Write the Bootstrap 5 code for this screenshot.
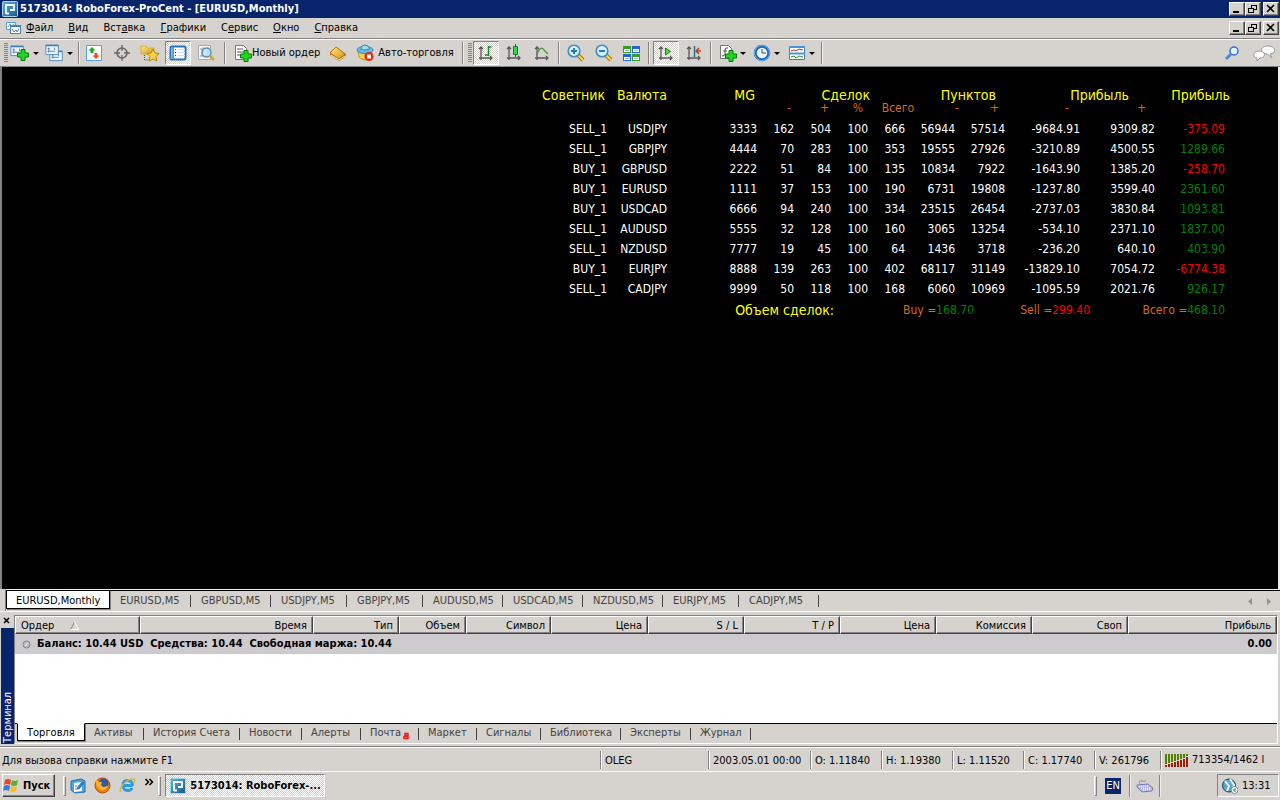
<!DOCTYPE html>
<html lang="ru">
<head>
<meta charset="utf-8">
<meta name="viewport" content="width=device-width, initial-scale=1">
<title>5173014: RoboForex-ProCent - [EURUSD,Monthly]</title>
<link href="https://cdn.jsdelivr.net/npm/bootstrap@5.3.0/dist/css/bootstrap.min.css" rel="stylesheet">
<style>
:root{--face:#d6d3ce;--shade:#848284;--navy:#08246b}
body{background:var(--face);color:#000;font-family:"DejaVu Sans Condensed","DejaVu Sans",sans-serif;font-size:11px;line-height:14px;overflow:hidden}
button{font:inherit;color:inherit;background:none;border:0;padding:0}
a{color:inherit;text-decoration:none}
svg{display:block;flex:none}
.crisp{shape-rendering:crispEdges}
.titlebar{background:var(--navy);color:#fff;height:18px;padding:0 1px 0 2px;font-weight:700;gap:2px}
.menubar{height:21px;padding:0 1px 0 2px;border-bottom:1px solid var(--shade)}
.menubar a{padding:2px 0;margin-right:15px}
.menubar a span{text-decoration:underline}
.winbtns{display:flex}
.winbtn{width:16px;height:14px;background:var(--face);border:1px solid;border-color:#fff #424142 #424142 #fff;box-shadow:inset -1px -1px var(--shade);display:flex;align-items:center;justify-content:center}
.winbtn:last-child{margin-left:2px}
.toolbar{height:28px;border-top:1px solid #fff;border-bottom:1px solid var(--shade);padding:0 2px 0 4px}
.grip{width:4px;height:20px;background:repeating-linear-gradient(var(--shade) 0 1px,transparent 1px 2px)}
.tool{height:24px;width:28px;display:flex;align-items:center;justify-content:center}
.tool.drop{width:35px;justify-content:start;gap:3px;padding-left:2px}
.tool.wide{width:auto;white-space:nowrap}
.pressed{background:repeating-conic-gradient(#fff 0 25%,var(--face) 0 50%) 0 0/2px 2px;border:1px solid;border-color:var(--shade) #fff #fff var(--shade)}
.tool.pressed{width:26px;margin:0 1px}
.caret{border:3px solid transparent;border-top-color:#000;border-bottom:0}
.bar{width:2px;height:22px;border-left:1px solid var(--shade);border-right:1px solid #eee;margin:0 2px}
.chart{background:#000;border-left:2px solid #848284;border-right:2px solid #efefef;padding:21px 48px 0 0;min-height:0}
.stats{width:690px;font-size:12px;line-height:20px;color:#fff}
.stats tr{display:grid;text-align:right;white-space:nowrap}
.stats th{font-weight:400;padding:0}
.stats td{padding:0}
.stats .heads{grid-template-columns:65px 62px 88px 115px 126px 133px 101px;color:#ff0;font-size:14px;line-height:14px}
.stats .subs{grid-template-columns:251px 38px 34px 51px 45px 40px 70px 77px;color:#d6691a;height:17px;line-height:12px}
.stats tbody tr{grid-template-columns:67px 60px 90px 37px 37px 37px 37px 50px 50px 75px 75px 70px}
.stats tfoot tr{grid-template-columns:294px 140px 116px 135px;color:#d6691a;line-height:22px}
.stats tfoot th{color:#ff0;font-size:14px}
.up{color:#008200}.down{color:#f00}
.tabstrip{display:grid;color:#424142;white-space:nowrap}
.tabstrip a{position:relative;padding-left:10px;line-height:14px;padding-top:3px;border-top:1px solid #000}
.tabstrip a:not(.current)::after{content:"";position:absolute;right:0;top:4px;height:12px;width:1px;background:#424142}
.tabstrip .current{padding-left:9px;background:#fff;color:#000;border:1px solid #000;border-top-color:#fff;box-shadow:1px 1px var(--shade)}
.charttabs{grid-template-columns:104px 81px 80px 76px 76px 80px 80px 80px 76px 80px 1fr;height:22px;margin-left:5px;border-left:1px solid var(--shade);border-top:1px solid #efefef}
.charttabs a{height:19px}
.charttabs .current{border-top-color:#000}
.filler{border-top:1px solid #000}
.terminal{height:133px;border-top:1px solid #fff;padding-top:3px}
.side{width:15px}
.sidebar-name{background:var(--navy);color:#fff;width:13px;margin-left:1px;writing-mode:vertical-rl;transform:rotate(180deg);line-height:13px;padding-top:1px}
.panel{border-left:1px solid var(--shade);border-top:1px solid var(--shade);border-bottom:1px solid #fff;border-right:1px solid #fff;margin-right:2px}
.orders{table-layout:fixed;width:100%;border-collapse:separate;border-spacing:0}
.orders th{font-weight:400;text-align:right;height:18px;line-height:14px;padding:1px 5px 0 5px;background:var(--face);border:1px solid;border-color:#fff #424142 #424142 #fff;box-shadow:inset -1px -1px var(--shade)}
.orders td{background:#cecbce;font-weight:700;height:20px;padding:0 5px 0 7px}
.bullet{margin-right:6px}
.termtabs{grid-template-columns:2px 68px 59px 96px 62px 59px 58px 58px 64px 80px 70px 60px 1fr;height:20px;background:var(--face)}
.termtabs a{height:18px;padding-top:2px;padding-left:9px}
.status{height:26px;border-top:1px solid var(--shade);border-bottom:1px solid #fff;padding:4px 0 0 2px;box-shadow:inset 0 1px #fff;margin-top:2px;line-height:20px}
.status span.cell{border-left:1px solid var(--shade);box-shadow:inset 1px 0 #fff;height:18px;padding-left:4px;flex:none;white-space:nowrap}
.cell-name{width:108px}.cell-date{width:102px}.cell-price{width:71px}.cell-vol{width:66px}.cell-link{width:120px}
.taskbar{height:28px;padding:2px 1px 3px 2px}
.raised{background:var(--face);border:1px solid;border-color:#fff #424142 #424142 #fff;box-shadow:inset -1px -1px var(--shade)}
.task{width:160px;font-weight:700}
.handle{width:3px;height:20px;border:1px solid;border-color:#fff var(--shade) var(--shade) #fff}
.lang{background:var(--navy);color:#fff;width:16px;height:16px;line-height:16px;text-align:center}
.clock{width:62px;margin-left:56px;border:1px solid;border-color:var(--shade) #fff #fff var(--shade)}
</style>
</head>
<body class="vh-100 d-flex flex-column">
<svg width="0" height="0" class="position-absolute" aria-hidden="true">
<defs>
<linearGradient id="blu" x2="1" y2="1"><stop stop-color="#5ab6e0"/><stop offset="1" stop-color="#145a8c"/></linearGradient>
<linearGradient id="gld" x2="1" y2="1"><stop stop-color="#ffe98a"/><stop offset="1" stop-color="#d49410"/></linearGradient>
<symbol id="plus" viewBox="0 0 12 12"><path d="M4 .5h4V4h3.500v4H8v3.500H4V8H.5V4H4z" fill="#1ed81e" stroke="#087a10"/></symbol>
<symbol id="logo" viewBox="0 0 16 16"><rect x=".5" y=".5" width="15" height="15" rx="1" fill="url(#blu)" stroke="#a8d4ea"/><path d="M4 13V4h8v5H8M4 12.500h3" fill="none" stroke="#fff" stroke-width="1.800"/></symbol>
<symbol id="axes" viewBox="0 0 18 18"><path d="M4 16V3M2 14h13M2 5l2-2 2 2M13 12l2 2-2 2" fill="none" stroke="#585858" stroke-width="1.300"/></symbol>
<symbol id="min" viewBox="0 0 12 10"><path d="M2 8h6" stroke="#000" stroke-width="2"/></symbol>
<symbol id="rest" viewBox="0 0 12 10"><path d="M4 3.500V1.500h5v4H7M4 1h6M1.500 4.500h5v4h-5zM1 4h6" fill="none" stroke="#000"/></symbol>
<symbol id="cls" viewBox="0 0 12 10"><path d="M2 1l7 7M9 1L2 8" stroke="#000" stroke-width="1.600"/></symbol>
<symbol id="win" viewBox="0 0 18 14"><path d="M1 1.500h15v11H1z" fill="#eaf5ff" stroke="#3c7fc0"/><path d="M1 1.500h15" stroke="#3c7fc0" stroke-width="2"/><path d="M4.500 4v6M3 8.500h9M11.500 4v3M3 5.500h3" stroke="#4b7aa0" fill="none"/></symbol>
<symbol id="lens" viewBox="0 0 18 18"><path d="M11 11l5 5" stroke="#9a7416" stroke-width="4"/><path d="M11 11l5 5" stroke="#ffd84a" stroke-width="2"/><circle cx="7" cy="7" r="5.800" fill="#d8f0fc" stroke="#3c8ccc" stroke-width="1.600"/></symbol>
</defs></svg>

<header>
<div class="titlebar d-flex align-items-center">
<svg width="16" height="16"><use href="#logo"/></svg><span class="flex-grow-1">5173014: RoboForex-ProCent - [EURUSD,Monthly]</span>
<div class="winbtns"><button class="winbtn" aria-label="Свернуть"><svg class="crisp" width="12" height="10"><use href="#min"/></svg></button><button class="winbtn" aria-label="Восстановить"><svg class="crisp" width="12" height="10"><use href="#rest"/></svg></button><button class="winbtn" aria-label="Закрыть"><svg width="12" height="10"><use href="#cls"/></svg></button></div>
</div>
<nav class="menubar d-flex align-items-center">
<svg class="ms-1 me-1" width="16" height="16" viewBox="0 0 16 16"><path d="M.5 2.500h9v7h-9z" fill="#fff" stroke="#5b9bd8"/><path d="M2 7l2-3 2 3 2-3" fill="none" stroke="#5b9bd8"/><path d="M4.500 6.500h10v7h-10z" fill="#fff" stroke="#3f82c4"/><path d="M4 6h11" stroke="#3f82c4" stroke-width="2"/><path d="M6 9l2 3 2-2 1 2 2-3" fill="none" stroke="#5b7b9a"/></svg>
<div class="d-flex flex-grow-1"><a href="#"><span>Ф</span>айл</a><a href="#"><span>В</span>ид</a><a href="#">Вст<span>а</span>вка</a><a href="#"><span>Г</span>рафики</a><a href="#">С<span>е</span>рвис</a><a href="#"><span>О</span>кно</a><a href="#"><span>С</span>правка</a></div>
<div class="winbtns"><button class="winbtn" aria-label="Свернуть окно"><svg class="crisp" width="12" height="10"><use href="#min"/></svg></button><button class="winbtn" aria-label="Восстановить окно"><svg class="crisp" width="12" height="10"><use href="#rest"/></svg></button><button class="winbtn" aria-label="Закрыть окно"><svg width="12" height="10"><use href="#cls"/></svg></button></div>
</nav>
<div class="toolbar d-flex align-items-center">
<div class="grip"></div>
<button class="tool drop" aria-label="Новый график"><svg width="20" height="18" viewBox="0 0 20 18"><use href="#win" width="15" height="12" y="1"/><use href="#plus" x="7" y="5" width="12" height="12"/></svg><i class="caret"></i></button>
<button class="tool drop" aria-label="Профили"><svg width="19" height="18" viewBox="0 0 19 18"><use href="#win" x="4" y="6" width="15" height="12"/><use href="#win" width="15" height="12"/></svg><i class="caret"></i></button>
<div class="bar mx-0"></div>
<button class="tool" aria-label="Обзор рынка"><svg width="18" height="18" viewBox="0 0 18 18"><path d="M1.500 1.500h15v15h-15z" fill="#fff" stroke="#58a0dc"/><path d="M4 4v11M6 14h9" stroke="#d8e6f2"/><path d="M7 3l3.500 3.500H8.500V9h-3V6.500h-2z" fill="#28a428"/><path d="M11 15l-3.500-3.500H9.500V9h3v2.500h2z" fill="#e85028"/></svg></button>
<button class="tool" aria-label="Окно данных"><svg width="18" height="18" viewBox="0 0 18 18"><circle cx="9" cy="9" r="5" fill="none" stroke="#666" stroke-width="1.600"/><path d="M9 1v6M9 11v6M1 9h6M11 9h6" stroke="#666" stroke-width="1.300"/></svg></button>
<button class="tool" aria-label="Навигатор"><svg width="20" height="18" viewBox="0 0 20 18"><path d="M1 9V2h5l1 2h7v6H1z" fill="url(#gld)" stroke="#d8ab3c"/><path d="M4.500 11v5h5" stroke="#555" stroke-dasharray="1 1" fill="none"/><path d="M13 5l2 4 4 .5-3 3 .8 4.500-3.800-2-3.800 2 .8-4.500-3-3 4-.5z" fill="#ffd440" stroke="#b88410"/></svg></button>
<button class="tool pressed" aria-label="Терминал"><svg width="18" height="18" viewBox="0 0 18 18"><rect x="1.500" y="2.500" width="15" height="13" rx="1" fill="#fff" stroke="#2a70bc" stroke-width="2"/><path d="M4 3v12" stroke="#5c9cd8" stroke-width="2"/><path d="M9 5.500h7M9 8.500h7M9 11.500h7" stroke="#cddff0"/><path d="M6 5.500h1M6 8.500h1M6 11.500h1" stroke="#333"/><path d="M6 5.500h1" stroke="#d02020"/></svg></button>
<button class="tool" aria-label="Тестер стратегий"><svg width="18" height="18" viewBox="0 0 18 18"><path d="M1.500 1.500h12v14h-12z" fill="#f7f7f7" stroke="#aaa"/><path d="M3 5h2v7M6 3v6M11 3v8M3 12h8" stroke="#999" fill="none"/><circle cx="9.500" cy="8.500" r="4.500" fill="#bfe0f4" fill-opacity=".8" stroke="#5590c0" stroke-width="1.400"/><path d="M13 12l4 4" stroke="#d8a020" stroke-width="2.500"/></svg></button>
<div class="bar ms-1 me-2"></div>
<button class="tool wide"><svg width="18" height="18" viewBox="0 0 18 18"><path d="M1.500 1.500h8l3 3v11h-11z" fill="#fff" stroke="#777"/><path d="M3 5h6M3 8h7M3 11h4" stroke="#555"/><use href="#plus" x="6" y="6" width="12" height="12"/></svg>Новый ордер</button>
<button class="tool ms-1" aria-label="MetaEditor"><svg width="18" height="18" viewBox="0 0 18 18"><path d="M1 8l6-5 10 7-1 3-6 4-9-6z" fill="#a8640c"/><path d="M1 9l6-6 9 7-6 5z" fill="url(#gld)" stroke="#b87c14"/><path d="M2 11l8 5 6-4" stroke="#fff0c0" fill="none"/></svg></button>
<button class="tool wide ms-1 gap-1"><svg width="18" height="18" viewBox="0 0 18 18"><path d="M2 7l1 6q6 6 12 0l1-6z" fill="#f5cf50" stroke="#bd962c"/><ellipse cx="9" cy="6" rx="8" ry="3.500" fill="#67b9e4" stroke="#3b87b7"/><path d="M4.500 5Q5 1 9 1t4.500 4q-4 2-9 0" fill="#9bdcf5" stroke="#3b87b7"/><circle cx="13" cy="12.500" r="4.500" fill="#e02818"/><path d="M11 10.500h4v4h-4z" fill="#fff"/></svg>Авто-торговля</button>
<div class="bar ms-2 me-1"></div><div class="grip"></div>
<button class="tool pressed" aria-label="Бары"><svg width="18" height="18" viewBox="0 0 18 18"><use href="#axes"/><path d="M11.500 2v10M11.500 3h3M8 11h3.500" stroke="#188c28" stroke-width="1.500"/></svg></button>
<button class="tool" aria-label="Японские свечи"><svg width="18" height="18" viewBox="0 0 18 18"><use href="#axes"/><path d="M10.500 0v13" stroke="#087a20"/><path d="M8.500 2.500h4v8h-4z" fill="#30d84c" stroke="#088020"/></svg></button>
<button class="tool" aria-label="Линия"><svg width="18" height="18" viewBox="0 0 18 18"><use href="#axes"/><path d="M4 10q4-9 7-4l4 4" fill="none" stroke="#3c9c3c" stroke-width="1.300"/></svg></button>
<div class="bar"></div>
<button class="tool" aria-label="Увеличить"><svg width="18" height="18" viewBox="0 0 18 18"><use href="#lens"/><path d="M4 7h6M7 4v6" stroke="#2878b8" stroke-width="2"/></svg></button>
<button class="tool" aria-label="Уменьшить"><svg width="18" height="18" viewBox="0 0 18 18"><use href="#lens"/><path d="M4 7h6" stroke="#2878b8" stroke-width="2"/></svg></button>
<button class="tool" aria-label="Упорядочить окна"><svg class="crisp" width="17" height="17" viewBox="0 0 17 17"><path d="M0 1h8v7H0zM9 9h8v7H9z" fill="#389c28"/><path d="M9 1h8v7H9zM0 9h8v7H0z" fill="#2464cc"/><path d="M1 4h6v3H1zM10 4h6v3h-6zM1 12h6v3H1zM10 12h6v3h-6z" fill="#fff"/><path d="M2 5h4M11 5h4M2 13h4M11 13h4" stroke="#9cb8d4"/></svg></button>
<div class="bar"></div>
<button class="tool pressed" aria-label="Автопрокрутка"><svg width="18" height="18" viewBox="0 0 18 18"><use href="#axes"/><path d="M8.500 4v7l5-3.500z" fill="#48d848" stroke="#108420"/></svg></button>
<button class="tool" aria-label="Сдвиг графика"><svg width="18" height="18" viewBox="0 0 18 18"><use href="#axes"/><path d="M9.500 2v11" stroke="#286c9c" stroke-width="1.500"/><path d="M11 7h5M14 4l-3 3 3 3" fill="none" stroke="#c03c18" stroke-width="1.500"/></svg></button>
<div class="bar me-1"></div>
<button class="tool drop" aria-label="Индикаторы"><svg width="19" height="18" viewBox="0 0 19 18"><path d="M2.500 1.500h8l3 3v10h-11z" fill="#fff" stroke="#777"/><path d="M10 4Q7 3 7 6v4q0 2-3 2M5 7h4" stroke="#555" fill="none"/><use href="#plus" x="7" y="6" width="12" height="12"/></svg><i class="caret"></i></button>
<button class="tool drop" aria-label="Периоды"><svg width="18" height="18" viewBox="0 0 18 18"><circle cx="9" cy="9" r="6.800" fill="#e8f5ff" stroke="#1c68b8" stroke-width="3"/><circle cx="9" cy="9" r="7.500" fill="none" stroke="#64b0f0"/><path d="M9 5v4h4" fill="none" stroke="#445"/></svg><i class="caret"></i></button>
<button class="tool drop" aria-label="Шаблоны"><svg width="18" height="18" viewBox="0 0 18 18"><path d="M1.500 2.500h15v13h-15z" fill="#fff" stroke="#3c80c0"/><path d="M1 3h16M1 9.500h16" stroke="#4b94d8" stroke-width="2"/><path d="M3 7l3-1 2 1 3-2 4 1" fill="none" stroke="#b03c20"/><path d="M3 13l3-1 2 2 3-2 4 1" fill="none" stroke="#30903c"/></svg><i class="caret"></i></button>
<div class="bar ms-0"></div>
<div class="ms-auto d-flex gap-1">
<button class="tool" aria-label="Поиск"><svg width="18" height="18" viewBox="0 0 18 18"><path d="M8 10l-5 5" stroke="#5088d8" stroke-width="3"/><circle cx="11" cy="7" r="4" fill="#e4f3ff" stroke="#3470d4" stroke-width="1.500"/></svg></button>
<button class="tool" aria-label="Чат"><svg width="22" height="18" viewBox="0 0 22 18"><path d="M15 2c9 0 8 8 2 8l2 4-5-4C6 9 7 2 15 2z" fill="#fafafa" stroke="#999"/><path d="M6 7c7 0 7 7 1 7l-3 3v-3C-1 13 0 7 6 7z" fill="#fff" stroke="#999"/></svg></button>
</div>
</div>
</header>

<main class="chart flex-grow-1">
<table class="stats ms-auto">
<thead>
<tr class="heads"><th>Советник</th><th>Валюта</th><th>MG</th><th>Сделок</th><th>Пунктов</th><th>Прибыль</th><th>Прибыль</th></tr>
<tr class="subs"><th>-</th><th>+</th><th>%</th><th>Всего</th><th>-</th><th>+</th><th>-</th><th>+</th></tr>
</thead>
<tbody>
<tr><td>SELL_1</td><td>USDJPY</td><td>3333</td><td>162</td><td>504</td><td>100</td><td>666</td><td>56944</td><td>57514</td><td>-9684.91</td><td>9309.82</td><td class="down">-375.09</td></tr>
<tr><td>SELL_1</td><td>GBPJPY</td><td>4444</td><td>70</td><td>283</td><td>100</td><td>353</td><td>19555</td><td>27926</td><td>-3210.89</td><td>4500.55</td><td class="up">1289.66</td></tr>
<tr><td>BUY_1</td><td>GBPUSD</td><td>2222</td><td>51</td><td>84</td><td>100</td><td>135</td><td>10834</td><td>7922</td><td>-1643.90</td><td>1385.20</td><td class="down">-258.70</td></tr>
<tr><td>BUY_1</td><td>EURUSD</td><td>1111</td><td>37</td><td>153</td><td>100</td><td>190</td><td>6731</td><td>19808</td><td>-1237.80</td><td>3599.40</td><td class="up">2361.60</td></tr>
<tr><td>BUY_1</td><td>USDCAD</td><td>6666</td><td>94</td><td>240</td><td>100</td><td>334</td><td>23515</td><td>26454</td><td>-2737.03</td><td>3830.84</td><td class="up">1093.81</td></tr>
<tr><td>SELL_1</td><td>AUDUSD</td><td>5555</td><td>32</td><td>128</td><td>100</td><td>160</td><td>3065</td><td>13254</td><td>-534.10</td><td>2371.10</td><td class="up">1837.00</td></tr>
<tr><td>SELL_1</td><td>NZDUSD</td><td>7777</td><td>19</td><td>45</td><td>100</td><td>64</td><td>1436</td><td>3718</td><td>-236.20</td><td>640.10</td><td class="up">403.90</td></tr>
<tr><td>BUY_1</td><td>EURJPY</td><td>8888</td><td>139</td><td>263</td><td>100</td><td>402</td><td>68117</td><td>31149</td><td>-13829.10</td><td>7054.72</td><td class="down">-6774.38</td></tr>
<tr><td>SELL_1</td><td>CADJPY</td><td>9999</td><td>50</td><td>118</td><td>100</td><td>168</td><td>6060</td><td>10969</td><td>-1095.59</td><td>2021.76</td><td class="up">926.17</td></tr>
</tbody>
<tfoot><tr><th>Объем сделок:</th><td>Buy =<span class="up">168.70</span></td><td>Sell =<span class="down">299.40</span></td><td>Всего =<span class="up">468.10</span></td></tr></tfoot>
</table>
</main>

<nav class="tabstrip charttabs">
<a class="current" href="#">EURUSD,Monthly</a><a href="#">EURUSD,M5</a><a href="#">GBPUSD,M5</a><a href="#">USDJPY,M5</a><a href="#">GBPJPY,M5</a><a href="#">AUDUSD,M5</a><a href="#">USDCAD,M5</a><a href="#">NZDUSD,M5</a><a href="#">EURJPY,M5</a><a href="#">CADJPY,M5</a>
<div class="filler d-flex justify-content-end align-items-center pe-2"><svg width="24" height="7" viewBox="0 0 24 7"><path d="M4 0v7L0 3.500zM19 0v7l4-3.500z" fill="#949294"/></svg></div>
</nav>

<section class="terminal d-flex">
<div class="side d-flex flex-column"><button aria-label="Закрыть терминал"><svg width="13" height="13" viewBox="0 0 13 13"><path d="M4 3l5 5M9 3L4 8" stroke="#000" stroke-width="1.600"/></svg></button><div class="sidebar-name flex-grow-1">Терминал</div></div>
<div class="panel flex-grow-1 d-flex flex-column">
<div class="bg-white flex-grow-1">
<table class="orders">
<colgroup><col style="width:125px"><col style="width:173px"><col style="width:86px"><col style="width:67px"><col style="width:85px"><col style="width:97px"><col style="width:96px"><col style="width:96px"><col style="width:96px"><col style="width:96px"><col style="width:96px"><col></colgroup>
<thead><tr><th><span class="d-flex align-items-center">Ордер<svg class="ms-3" width="9" height="8" viewBox="0 0 9 8"><path d="M4.500 0L.5 7.500" stroke="#848284"/><path d="M4.500 0l4 7.500H.5" fill="none" stroke="#fff"/></svg></span></th><th>Время</th><th>Тип</th><th>Объем</th><th>Символ</th><th>Цена</th><th>S / L</th><th>T / P</th><th>Цена</th><th>Комиссия</th><th>Своп</th><th>Прибыль</th></tr></thead>
<tbody><tr><td colspan="11"><span class="d-flex align-items-center"><svg class="bullet" width="9" height="9" viewBox="0 0 9 9"><circle cx="4.500" cy="4.500" r="3.500" fill="#c0bec0" stroke="#848284"/><path d="M3 6l3-3" stroke="#eee"/></svg><span class="text-nowrap">Баланс: 10.44 USD&nbsp; Средства: 10.44&nbsp; Свободная маржа: 10.44</span></span></td><td class="text-end">0.00</td></tr></tbody>
</table>
</div>
<nav class="tabstrip termtabs"><div class="filler"></div><a class="current" href="#">Торговля</a><a href="#">Активы</a><a href="#">История Счета</a><a href="#">Новости</a><a href="#">Алерты</a><a href="#">Почта<svg class="d-inline-block align-bottom" width="9" height="8" viewBox="-2 -1 9 8"><path d="M2 .5h3v2H2zM1 3.500h4v2H1z" fill="none" stroke="#f01818" stroke-width="1.500"/></svg></a><a href="#">Маркет</a><a href="#">Сигналы</a><a href="#">Библиотека</a><a href="#">Эксперты</a><a href="#">Журнал</a><div class="filler"></div></nav>
</div>
</section>

<footer>
<div class="status d-flex"><div class="flex-grow-1 text-nowrap">Для вызова справки нажмите F1</div><span class="cell cell-name">OLEG</span><span class="cell cell-date">2003.05.01 00:00</span><span class="cell cell-price">O: 1.11840</span><span class="cell cell-price">H: 1.19380</span><span class="cell cell-price">L: 1.11520</span><span class="cell cell-price">C: 1.17740</span><span class="cell cell-vol">V: 261796</span><span class="cell cell-link d-flex align-items-center gap-1"><svg class="crisp" width="23" height="13" viewBox="0 0 23 13"><path d="M0 0h2v10H0zM3 0h2v9H3zM6 0h2v8H6zM9 0h2v7H9zM12 0h2v6h-2zM15 0h2v5h-2zM18 0h2v4h-2zM21 0h2v2h-2z" fill="#528200"/><path d="M0 11h2v2H0zM3 10h2v3H3zM6 9h2v4H6zM9 8h2v5H9zM12 7h2v6h-2zM15 6h2v7h-2zM18 5h2v8h-2zM21 3h2v10h-2z" fill="#9c2008"/></svg>713354/1462 l</span></div>
<div class="taskbar d-flex align-items-center">
<button class="raised h-100 d-flex align-items-center gap-1 fw-bold pe-1"><svg width="16" height="16" viewBox="0 0 16 16"><path d="M2 2q3-2 6 0L7 7Q4 5 1 7z" fill="#e84820"/><path d="M9 2q3 2 6 0l-1 5q-3 2-6 0z" fill="#58b030"/><path d="M1 8q3-2 6 0l-1 5q-3-2-6 0z" fill="#3878d8"/><path d="M8 8q3 2 6 0l-1 5q-3 2-6 0z" fill="#f8c020"/></svg>Пуск</button>
<div class="handle ms-2"></div>
<div class="d-flex gap-2 ms-1 align-items-center"><a href="#" aria-label="Рабочий стол"><svg width="16" height="16" viewBox="0 0 16 16"><path d="M1 3l10-2 4 2v11l-10 1-4-3z" fill="#4ca4e0" stroke="#2070b4"/><path d="M4 5l8-1v9l-8 1z" fill="#fff"/><path d="M7 10l5-6 2 1-5 6zM5 8h2M5 11h3" fill="#2d7dc1" stroke="#2d7dc1"/></svg></a>
<a href="#" aria-label="Firefox"><svg width="17" height="17" viewBox="0 0 17 17"><circle cx="8.500" cy="8.500" r="7.500" fill="#ed7d18" stroke="#b74808"/><circle cx="9.500" cy="6.500" r="5" fill="#3058a8"/><path d="M2 2l3 3 3 0-1 3 2 2 5-1q-2 5-7 4Q1 11 2 2z" fill="#f8b428"/></svg></a>
<a href="#" aria-label="Internet Explorer"><svg width="17" height="17" viewBox="0 0 17 17"><path d="M13.500 9q0-5.500-5-5.500-4.500 0-4.500 5t5 5q3 0 4-2.500M4.500 8.500h9" fill="none" stroke="#289ce4" stroke-width="2.800"/><path d="M2 15C-1 12 7 2 14 2q3 0 1 4" fill="none" stroke="#d8b43c" stroke-width="1.300"/></svg></a></div>
<button class="ms-2 align-self-start" aria-label="Ещё"><svg width="10" height="14" viewBox="0 0 10 14"><path d="M1.500 5l3 3-3 3M5.500 5l3 3-3 3" fill="none" stroke="#000" stroke-width="1.500"/></svg></button>
<div class="handle mx-1"></div>
<button class="task pressed h-100 d-flex align-items-center gap-1 ps-1"><svg width="16" height="16"><use href="#logo"/></svg>5173014: RoboForex-...</button>
<div class="ms-auto d-flex align-items-center h-100"><div class="handle"></div><span class="lang mx-2">EN</span><div class="bar mx-0"></div>
<svg class="mx-1" width="20" height="16" viewBox="0 0 20 16"><path d="M5 6Q3 2 7 3t4-1" stroke="#8888a0" fill="none"/><path d="M2 7l11-1 5 4-1 3-10 1-5-5z" fill="#b8b8e8" stroke="#777aac"/><path d="M4 8.500l9-.5M6 10.500l9-.5M8 12l7-.5" stroke="#fff" stroke-dasharray="1 1"/></svg>
<div class="bar mx-0"></div>
<div class="clock h-100 d-flex align-items-center gap-1 ps-1"><svg width="16" height="16" viewBox="0 0 16 16"><circle cx="7" cy="7.500" r="6.500" fill="#58a8cc" stroke="#203848"/><path d="M3 3l4 5-2 5M8 1l4 6-2 6" fill="none" stroke="#eef" stroke-width="2"/><circle cx="12.500" cy="12" r="3.500" fill="#fff" stroke="#789"/><path d="M14 11h-2v2h2" stroke="#189838" fill="none"/></svg>13:31</div></div>
</div>
</footer>
<script src="https://cdn.jsdelivr.net/npm/bootstrap@5.3.0/dist/js/bootstrap.bundle.min.js"></script>
</body>
</html>
